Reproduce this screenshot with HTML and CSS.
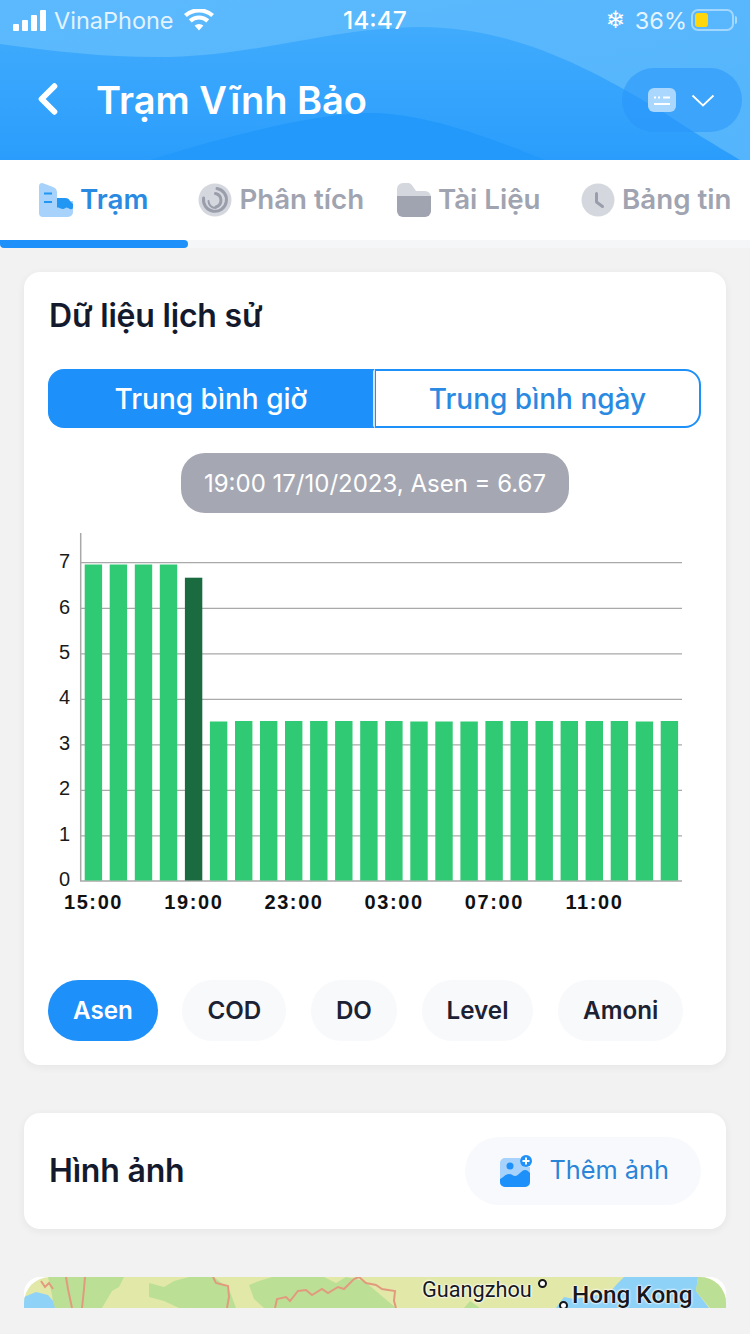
FILE: index.html
```html
<!DOCTYPE html>
<html lang="vi">
<head>
<meta charset="utf-8">
<title>Trạm Vĩnh Bảo</title>
<link rel="stylesheet" href="styles.css">
</head>
<body>
<div class="app">
  <header class="hero">
    <svg class="hero-bg" viewBox="0 0 750 160" preserveAspectRatio="none" aria-hidden="true">
      <defs>
        <linearGradient id="gbase" x1="0" y1="0" x2="0" y2="1"><stop offset="0" stop-color="#45aefd"/><stop offset="1" stop-color="#2a9dfc"/></linearGradient>
        <linearGradient id="gtop" x1="0" y1="0" x2="1" y2="1"><stop offset="0" stop-color="#5cb9fd"/><stop offset="1" stop-color="#54b5fc"/></linearGradient>
      </defs>
      <rect width="750" height="160" fill="url(#gbase)"/>
      <path fill="url(#gtop)" d="M0 44C60 52 110 58 170 57 260 55 330 28 420 27 520 27 600 75 660 110 690 130 715 145 740 160H750V0H0Z"/>
      <path class="w4" d="M150 160C230 135 320 112 375 113 430 115 490 138 545 160Z"/>
    </svg>
    <div class="status">
      <div class="status-left">
        <span class="signal"><i class="s1"></i><i class="s2"></i><i class="s3"></i><i class="s4"></i></span>
        <span class="carrier">VinaPhone</span>
        <svg class="wifi" viewBox="0 0 30 22"><path d="M15 21.5 10.6 16.6a6.6 6.6 0 0 1 8.800 0ZM7.600 13.400 4.800 10.300a15.400 15.400 0 0 1 20.400 0L22.400 13.400a11.200 11.200 0 0 0-14.800 0ZM2.800 8.100 0 5a22.500 22.500 0 0 1 30 0L27.200 8.100a18.300 18.300 0 0 0-24.400 0Z"/></svg>
      </div>
      <span class="clock">14:47</span>
      <div class="status-right">
        <span class="snow">❄</span>
        <span class="pct">36%</span>
        <span class="battery"><span class="level"></span></span>
        <span class="tip"></span>
      </div>
    </div>
    <div class="titlebar">
      <svg class="back" viewBox="0 0 20 30"><path d="M16 3 4 15l12 12"/></svg>
      <h1>Trạm Vĩnh Bảo</h1>
      <div class="picker">
        <svg class="kbd" viewBox="0 0 28 24"><rect width="28" height="24" rx="6" class="kbd-bg"/><path class="kbd-l" d="M6 9.500h2M10 9.500h2M15 9.500h7M6 16h16"/></svg>
        <svg class="chev" viewBox="0 0 24 13"><path d="M1.500 1.500 12 11.500 22.500 1.500"/></svg>
      </div>
    </div>
  </header>

  <nav class="tabs">
    <div class="tab on">
      <svg class="tab-ico" viewBox="0 0 34 34"><path class="b-l" d="M0 3a3 3 0 0 1 4-2.800L14 4c3 1.200 4 3 4 6v8h16v11a5 5 0 0 1-5 5H4a4 4 0 0 1-4-4Z"/><path class="b-d" d="M18 15h8c3 0 4 1 5 3l3 3v3c0 2-1.500 2.500-3 2-1.500-.5-2.500-1.500-3.500-1.500s-1.800 1.500-3.500 1.500-3-1-4.500-1.500H18Z"/><path class="b-s" d="M5 10.500h8M5 19h8"/></svg>
      <span>Trạm</span>
    </div>
    <div class="tab">
      <svg class="tab-ico" viewBox="0 0 34 34"><circle cx="17" cy="17" r="16.500" class="g-l"/><path class="g-a" d="M19 5.500A11.500 11.500 0 1 1 5.600 15"/><path class="g-a" d="M17.500 10.500a7 7 0 0 1 .5 13.500"/><path class="g-a thin" d="M10.500 18a7 7 0 0 0 7 7"/></svg>
      <span>Phân tích</span>
    </div>
    <div class="tab">
      <svg class="tab-ico" viewBox="0 0 34 34"><path class="g-l" d="M0 6a6 6 0 0 1 6-6h4c4 0 5 2 7 5l2 3h9a6 6 0 0 1 6 6v3H0Z"/><path class="g-d" d="M0 13h34v15a6 6 0 0 1-6 6H6a6 6 0 0 1-6-6Z"/></svg>
      <span>Tài Liệu</span>
    </div>
    <div class="tab">
      <svg class="tab-ico" viewBox="0 0 34 34"><circle cx="17" cy="17" r="16.500" class="g-l"/><path class="g-h" d="M15.500 10.500V19l6 4.500"/></svg>
      <span>Bảng tin</span>
    </div>
  </nav>
  <div class="tabline"><div class="tabbar"></div></div>

  <main class="content">
    <section class="card history">
      <h2>Dữ liệu lịch sử</h2>
      <div class="segment">
        <div class="seg active">Trung bình giờ</div>
        <div class="seg">Trung bình ngày</div>
      </div>
      <div class="tooltip">19:00 17/10/2023, Asen = 6.67</div>
      <svg class="chart" viewBox="24 520 702 440" aria-label="Asen">
        <g class="grid">
          <path d="M81 562.700H682M81 608.300H682M81 653.800H682M81 699.300H682M81 744.800H682M81 790.300H682M81 835.800H682"/>
        </g>
        <path class="axis" d="M80.700 533V881H682"/>
        <g class="bars">
          <rect x="84.700" y="564.500" width="17.400" height="316"/>
          <rect x="109.700" y="564.500" width="17.400" height="316"/>
          <rect x="134.800" y="564.500" width="17.400" height="316"/>
          <rect x="159.800" y="564.500" width="17.400" height="316"/>
          <rect class="sel" x="184.900" y="577.700" width="17.400" height="302.800"/>
          <rect x="209.900" y="721.500" width="17.400" height="159"/>
          <rect x="235" y="721" width="17.400" height="159.500"/>
          <rect x="260" y="721" width="17.400" height="159.500"/>
          <rect x="285" y="721" width="17.400" height="159.500"/>
          <rect x="310.100" y="721" width="17.400" height="159.500"/>
          <rect x="335.100" y="721" width="17.400" height="159.500"/>
          <rect x="360.200" y="721" width="17.400" height="159.500"/>
          <rect x="385.200" y="721" width="17.400" height="159.500"/>
          <rect x="410.300" y="721.500" width="17.400" height="159"/>
          <rect x="435.300" y="721.500" width="17.400" height="159"/>
          <rect x="460.400" y="721.500" width="17.400" height="159"/>
          <rect x="485.400" y="721" width="17.400" height="159.500"/>
          <rect x="510.500" y="721" width="17.400" height="159.500"/>
          <rect x="535.500" y="721" width="17.400" height="159.500"/>
          <rect x="560.600" y="721" width="17.400" height="159.500"/>
          <rect x="585.600" y="721" width="17.400" height="159.500"/>
          <rect x="610.700" y="721" width="17.400" height="159.500"/>
          <rect x="635.700" y="721.500" width="17.400" height="159"/>
          <rect x="660.700" y="721" width="17.400" height="159.500"/>
        </g>
        <g class="ylab">
          <text x="70" y="568">7</text>
          <text x="70" y="614">6</text>
          <text x="70" y="659">5</text>
          <text x="70" y="704">4</text>
          <text x="70" y="750">3</text>
          <text x="70" y="795">2</text>
          <text x="70" y="841">1</text>
          <text x="70" y="886">0</text>
        </g>
        <g class="xlab">
          <text x="93.500" y="909">15:00</text>
          <text x="193.800" y="909">19:00</text>
          <text x="294" y="909">23:00</text>
          <text x="394.200" y="909">03:00</text>
          <text x="494.400" y="909">07:00</text>
          <text x="594.500" y="909">11:00</text>
        </g>
      </svg>
      <div class="chips">
        <span class="chip active">Asen</span>
        <span class="chip">COD</span>
        <span class="chip">DO</span>
        <span class="chip">Level</span>
        <span class="chip">Amoni</span>
      </div>
    </section>

    <section class="card photos">
      <h2>Hình ảnh</h2>
      <div class="add">
        <svg class="add-ico" viewBox="0 0 32 32"><path class="p-l" d="M5 3h15v5h4v4h6v15a5 5 0 0 1-5 5H5a5 5 0 0 1-5-5V8a5 5 0 0 1 5-5Z"/><path class="p-d" d="M0 27v-3c3-1 5-5 9-5 3 0 4 2 6 2 4 0 6-6 10-6 2 0 3 1 5 3v9a5 5 0 0 1-5 5H5a5 5 0 0 1-5-5Z"/><circle class="p-d" cx="10" cy="11" r="3.500"/><circle class="p-d" cx="26" cy="6" r="6"/><path class="p-w" d="M26 2.500v7M22.500 6h7"/></svg>
        <span>Thêm ảnh</span>
      </div>
    </section>

    <section class="card mapcard">
      <svg class="map-bg" viewBox="0 0 702 31" preserveAspectRatio="none" aria-hidden="true">
        <rect width="702" height="31" class="m-land"/>
        <path class="m-green" d="M24 0H100L95 10 88 14 78 31H30L28 18Z"/>
        <path class="m-green" d="M125 6 140 10 150 4 165 0H190L205 12 212 31H155L140 24 125 20Z"/>
        <path class="m-green" d="M225 8 235 4 248 0H300L312 6 322 0 340 4 372 31H240L230 22Z"/>
        <path class="m-green" d="M440 31 446 24 456 31Z"/>
        <path class="m-water" d="M0 20 12 15 24 18 29 24 31 31H0Z"/>
        <path class="m-water" d="M532 31 540 20 550 22 585 16 594 6 600 0H674L672 14 685 31Z"/>
        <path class="m-green" d="M674 0H702V31H686L672 14Z"/>
        <path class="m-border" d="M17 4 21 10 25 6 29 12 M42 0 44 12 48 31 M61 0 60 12 58 31"/>
        <path class="m-border" d="M189 0 192 6 204 9 205 20 203 31"/>
        <path class="m-border" d="M251 31 253 22 262 20 266 24 274 14 282 13 288 18 298 12 304 16 314 10 320 12 330 2 335 0 342 6 352 8 358 12 371 14 370 24 372 31"/>
      </svg>
      <span class="pin p1"></span>
      <span class="pin p2"></span>
      <span class="place gz">Guangzhou</span>
      <span class="place hk">Hong Kong</span>
    </section>
  </main>
</div>
</body>
</html>
```

FILE: styles.css
```css
* { box-sizing: border-box; }
html, body { margin: 0; padding: 0; }
body { width: 750px; height: 1334px; overflow: hidden; background: #f2f2f2; font-family: Inter, "Noto Sans", sans-serif; }
.app { width: 750px; height: 1334px; overflow: hidden; }

.hero { position: relative; height: 160px; color: #fff; overflow: hidden; background: #2199fb; }
.hero-bg { position: absolute; inset: 0; width: 750px; height: 160px; }
.w4 { fill: #2299fb; }

.status { position: relative; height: 40px; display: grid; grid-template-columns: 1fr auto 1fr; align-items: center; padding: 0 13px; }
.status-left { display: flex; align-items: center; }
.signal { display: flex; align-items: flex-end; gap: 3px; height: 21px; margin-right: 8px; }
.signal i { display: block; width: 6px; background: #fff; border-radius: 1px; }
.s1 { height: 7px; } .s2 { height: 11px; } .s3 { height: 16px; } .s4 { height: 21px; }
.carrier { font-size: 23.500px; color: #e3f3ff; }
.wifi { width: 30px; height: 22px; margin-left: 10px; fill: #fff; }
.clock { font-size: 24.500px; font-weight: 500; }
.status-right { display: flex; align-items: center; justify-content: flex-end; }
.snow { font-family: "DejaVu Sans", sans-serif; font-size: 24px; line-height: 30px; color: #fff; margin-right: 9px; }
.pct { font-size: 23.500px; color: #e3f3ff; margin-right: 4px; }
.battery { width: 43px; height: 22px; border: 2px solid rgba(255,255,255,.45); border-radius: 7px; padding: 2px; display: block; }
.level { display: block; width: 13px; height: 14px; background: #ffd60a; border-radius: 3px; }
.tip { width: 2px; height: 8px; margin-left: 1px; background: rgba(255,255,255,.5); border-radius: 0 2px 2px 0; }

.titlebar { position: relative; height: 120px; display: flex; align-items: flex-start; padding: 28px 8px 0 37px; }
.back { width: 22px; height: 32px; margin-top: 15px; fill: none; stroke: #fff; stroke-width: 5.500; stroke-linecap: round; stroke-linejoin: round; }
.titlebar h1 { margin: 7px 0 0 37px; font-size: 38px; line-height: 50px; font-weight: 600; }
.picker { margin-left: auto; width: 120px; height: 64px; border-radius: 32px; background: rgba(40,150,250,.55); display: flex; align-items: center; padding-left: 26px; gap: 15px; }
.kbd { width: 28px; height: 24px; }
.kbd-bg { fill: #a9d7fe; }
.kbd-l { fill: none; stroke: #fff; stroke-width: 1.800; }
.chev { width: 24px; height: 13px; fill: none; stroke: #fff; stroke-width: 1.800; }

.tabs { height: 80px; background: #fff; display: grid; grid-template-columns: repeat(4, 1fr); }
.tab { display: flex; align-items: center; justify-content: center; gap: 7px; font-size: 27.700px; font-weight: 600; color: #a0a4b1; height: 80px; white-space: nowrap; }
.tab span { margin-bottom: 2px; }
.tab-ico { width: 34px; height: 34px; flex: none; }
.tab.on { color: #2a8ae2; }
.tabline { height: 8px; background: #f5f6f8; }
.tabbar { width: 188px; height: 8px; background: #1e90fa; border-radius: 0 4px 4px 4px; }
.b-l { fill: #a6d2fb; }
.b-d { fill: #2196f3; }
.b-s { fill: none; stroke: #2196f3; stroke-width: 2.200; }
.g-l { fill: #d5d7de; }
.g-d { fill: #a0a4b1; }
.g-a { fill: none; stroke: #9a9eab; stroke-width: 3; stroke-linecap: round; }
.thin { stroke-width: 2; }
.g-h { fill: none; stroke: #9a9eab; stroke-width: 3; stroke-linecap: round; stroke-linejoin: round; }

.content { padding: 24px 24px 0; }
.card { background: #fff; border-radius: 16px; box-shadow: 0 2px 8px rgba(30,40,60,.06); }
.card h2 { margin: 0; font-size: 32px; line-height: 40px; font-weight: 600; color: #141a2e; letter-spacing: -.2px; }

.history { height: 793px; padding: 24px; }
.history h2 { margin-left: 1px; }
.segment { margin-top: 33px; width: 653px; height: 59px; display: grid; grid-template-columns: 327px 326px; }
.seg { display: flex; align-items: center; justify-content: center; font-size: 28px; font-weight: 500; color: #2a8ae2; border: 2px solid #1e90fa; border-left-width: 1px; border-radius: 0 16px 16px 0; }
.seg.active { background: #1e90fa; color: #fff; border-right-color: #cfe6fe; border-radius: 16px 0 0 16px; }
.tooltip { margin: 25px 0 0 133px; width: 388px; height: 60px; display: flex; align-items: center; justify-content: center; border-radius: 24px; background: #a5a8b3; color: #fff; font-size: 24px; white-space: nowrap; }
.chart { display: block; width: 702px; height: 440px; margin: 7px -24px 0; }
.grid path { fill: none; stroke: #a9a9a9; stroke-width: 1.200; }
.axis { fill: none; stroke: #a9a9a9; stroke-width: 1.500; }
.bars rect { fill: #30c974; }
.bars rect.sel { fill: #1a6b3f; }
.ylab text { font-family: "Liberation Sans", Arial, sans-serif; font-size: 20px; fill: #1a1a1a; text-anchor: end; }
.xlab text { font-family: "Liberation Sans", Arial, sans-serif; font-size: 20px; font-weight: 700; fill: #111; text-anchor: middle; letter-spacing: 1.600px; }

.chips { display: flex; gap: 24.600px; margin-top: 20px; }
.chip { height: 61px; display: flex; align-items: center; justify-content: center; padding: 0 25px; border-radius: 31px; background: #f8f9fb; font-size: 24.200px; font-weight: 600; color: #1c2233; }
.chip.active { background: #1e90fa; color: #fff; }

.photos { margin-top: 48px; height: 116px; display: flex; align-items: center; justify-content: space-between; padding: 0 25px; }
.add { width: 236px; height: 68px; border-radius: 34px; background: #f7f9fc; display: flex; align-items: center; gap: 17.500px; padding-left: 35px; font-size: 25.300px; color: #2a84d8; }
.add span { margin-bottom: 4px; }
.add-ico { width: 32px; height: 32px; flex: none; }
.p-l { fill: #a6d2fb; }
.p-d { fill: #1e90fa; }
.p-w { fill: none; stroke: #fff; stroke-width: 2; }

.mapcard { position: relative; margin-top: 48px; height: 31px; border-radius: 16px 16px 0 0; overflow: hidden; box-shadow: none; }
.map-bg { position: absolute; inset: 0; width: 702px; height: 31px; border-radius: 26px 26px 0 0; }
.m-land { fill: #e2e8a8; }
.m-green { fill: #bcdf96; }
.m-water { fill: #8ed2f7; }
.m-border { fill: none; stroke: #e29a7e; stroke-width: 2; }
.place { position: absolute; font-family: Roboto, "Noto Sans", sans-serif; color: #16181c; white-space: nowrap; text-shadow: 0 0 2px #fff, 0 0 2px #fff, 0 0 3px #fff; }
.gz { left: 398px; top: 0; font-size: 21.700px; line-height: 26px; }
.hk { left: 548px; top: 3px; font-size: 24.300px; line-height: 29px; font-weight: 500; }
.pin { position: absolute; border-radius: 50%; border: 2px solid #16181c; background: #fff; width: 9px; height: 9px; }
.p1 { left: 514px; top: 2px; }
.p2 { left: 535px; top: 24px; }
```
